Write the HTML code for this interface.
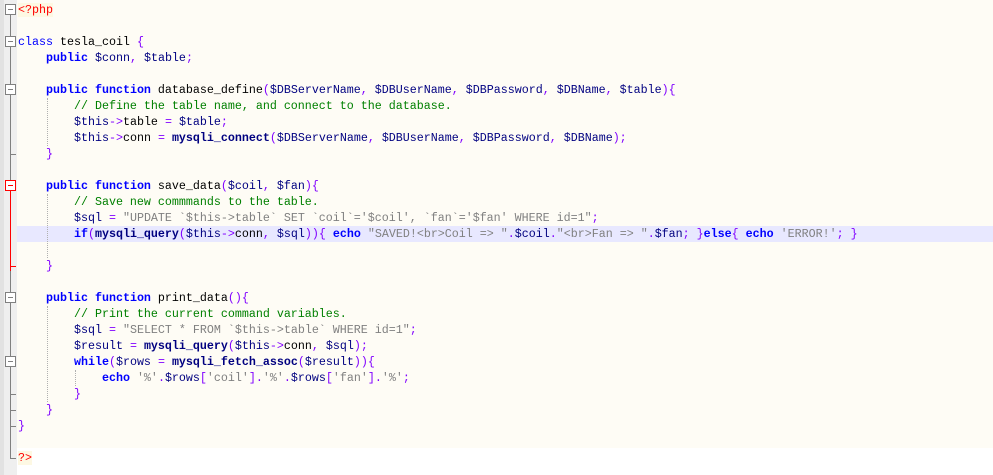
<!DOCTYPE html>
<html><head><meta charset="utf-8"><style>
body{margin:0;width:993px;height:475px;overflow:hidden;background:#fff;position:relative;font-family:"Liberation Mono",monospace;font-size:11.67px}
#margin{position:absolute;left:0;top:0;width:17px;height:475px;background:#efefef}
#margin2{position:absolute;left:0;top:0;width:4px;height:475px;background:#e2e2e2}
#phpbg{position:absolute;left:17px;top:0;width:976px;height:448px;background:#FEFCF5}
.hl{position:absolute;left:17px;width:976px;height:16px;background:#E8E8FF}
.ln{position:absolute;left:18px;height:16px;line-height:16px;white-space:pre;color:#000}
.k{color:#0000FF;font-weight:bold}
.v{color:#000080}
.o{color:#8000FF}
.s{color:#808080}
.c{color:#008000}
.f{color:#000080;font-weight:bold}
.t{color:#FF0000;background:#FDF8E3}
.vl{position:absolute;width:1px}
.hz{position:absolute;height:1px}
.box{position:absolute;left:5px;width:11px;height:11px;border:1px solid #808080;background:#fff;box-sizing:border-box}
.box::after{content:"";position:absolute;left:2px;top:4px;width:5px;height:1px;background:#808080}
.box.r{border-color:#f00}.box.r::after{background:#f00}
.ig{position:absolute;width:0;border-left:1px dotted #b0b0b0}
</style></head><body>
<div id="margin"></div>
<div id="margin2"></div>
<div id="phpbg"></div>
<div class="hl" style="top:226px"></div>
<div class="vl" style="left:10px;top:12px;height:447px;background:#808080"></div>
<div class="vl" style="left:10px;top:186px;height:85px;background:#f00"></div>
<div class="hz" style="left:10px;top:154px;width:6px;background:#808080"></div>
<div class="hz" style="left:10px;top:266px;width:6px;background:#f00"></div>
<div class="hz" style="left:10px;top:394px;width:6px;background:#808080"></div>
<div class="hz" style="left:10px;top:410px;width:6px;background:#808080"></div>
<div class="hz" style="left:10px;top:426px;width:6px;background:#808080"></div>
<div class="hz" style="left:10px;top:458px;width:6px;background:#808080"></div>
<div class="box" style="top:4px"></div>
<div class="box" style="top:36px"></div>
<div class="box" style="top:84px"></div>
<div class="box r" style="top:180px"></div>
<div class="box" style="top:292px"></div>
<div class="box" style="top:356px"></div>
<div class="ig" style="left:47px;top:98px;height:48px"></div>
<div class="ig" style="left:47px;top:194px;height:64px"></div>
<div class="ig" style="left:47px;top:306px;height:96px"></div>
<div class="ig" style="left:75px;top:370px;height:16px"></div>
<div class="ln" style="top:2px"><span class="t">&lt;?php</span></div>
<div class="ln" style="top:34px"><span class="k" style="font-weight:normal">class</span> tesla_coil <span class="o">{</span></div>
<div class="ln" style="top:50px">    <span class="k">public</span> <span class="v">$conn</span><span class="o">,</span> <span class="v">$table</span><span class="o">;</span></div>
<div class="ln" style="top:82px">    <span class="k">public</span> <span class="k">function</span> database_define<span class="o">(</span><span class="v">$DBServerName</span><span class="o">,</span> <span class="v">$DBUserName</span><span class="o">,</span> <span class="v">$DBPassword</span><span class="o">,</span> <span class="v">$DBName</span><span class="o">,</span> <span class="v">$table</span><span class="o">){</span></div>
<div class="ln" style="top:98px">        <span class="c">// Define the table name, and connect to the database.</span></div>
<div class="ln" style="top:114px">        <span class="v">$this</span><span class="o">-&gt;</span>table <span class="o">=</span> <span class="v">$table</span><span class="o">;</span></div>
<div class="ln" style="top:130px">        <span class="v">$this</span><span class="o">-&gt;</span>conn <span class="o">=</span> <span class="f">mysqli_connect</span><span class="o">(</span><span class="v">$DBServerName</span><span class="o">,</span> <span class="v">$DBUserName</span><span class="o">,</span> <span class="v">$DBPassword</span><span class="o">,</span> <span class="v">$DBName</span><span class="o">);</span></div>
<div class="ln" style="top:146px">    <span class="o">}</span></div>
<div class="ln" style="top:178px">    <span class="k">public</span> <span class="k">function</span> save_data<span class="o">(</span><span class="v">$coil</span><span class="o">,</span> <span class="v">$fan</span><span class="o">){</span></div>
<div class="ln" style="top:194px">        <span class="c">// Save new commmands to the table.</span></div>
<div class="ln" style="top:210px">        <span class="v">$sql</span> <span class="o">=</span> <span class="s">"UPDATE `$this-&gt;table` SET `coil`='$coil', `fan`='$fan' WHERE id=1"</span><span class="o">;</span></div>
<div class="ln" style="top:226px">        <span class="k">if</span><span class="o">(</span><span class="f">mysqli_query</span><span class="o">(</span><span class="v">$this</span><span class="o">-&gt;</span>conn<span class="o">,</span> <span class="v">$sql</span><span class="o">)){</span> <span class="k">echo</span> <span class="s">"SAVED!&lt;br&gt;Coil =&gt; "</span><span class="o">.</span><span class="v">$coil</span><span class="o">.</span><span class="s">"&lt;br&gt;Fan =&gt; "</span><span class="o">.</span><span class="v">$fan</span><span class="o">;</span> <span class="o">}</span><span class="k">else</span><span class="o">{</span> <span class="k">echo</span> <span class="s">'ERROR!'</span><span class="o">;</span> <span class="o">}</span></div>
<div class="ln" style="top:258px">    <span class="o">}</span></div>
<div class="ln" style="top:290px">    <span class="k">public</span> <span class="k">function</span> print_data<span class="o">(){</span></div>
<div class="ln" style="top:306px">        <span class="c">// Print the current command variables.</span></div>
<div class="ln" style="top:322px">        <span class="v">$sql</span> <span class="o">=</span> <span class="s">"SELECT * FROM `$this-&gt;table` WHERE id=1"</span><span class="o">;</span></div>
<div class="ln" style="top:338px">        <span class="v">$result</span> <span class="o">=</span> <span class="f">mysqli_query</span><span class="o">(</span><span class="v">$this</span><span class="o">-&gt;</span>conn<span class="o">,</span> <span class="v">$sql</span><span class="o">);</span></div>
<div class="ln" style="top:354px">        <span class="k">while</span><span class="o">(</span><span class="v">$rows</span> <span class="o">=</span> <span class="f">mysqli_fetch_assoc</span><span class="o">(</span><span class="v">$result</span><span class="o">)){</span></div>
<div class="ln" style="top:370px">            <span class="k">echo</span> <span class="s">'%'</span><span class="o">.</span><span class="v">$rows</span><span class="o">[</span><span class="s">'coil'</span><span class="o">].</span><span class="s">'%'</span><span class="o">.</span><span class="v">$rows</span><span class="o">[</span><span class="s">'fan'</span><span class="o">].</span><span class="s">'%'</span><span class="o">;</span></div>
<div class="ln" style="top:386px">        <span class="o">}</span></div>
<div class="ln" style="top:402px">    <span class="o">}</span></div>
<div class="ln" style="top:418px"><span class="o">}</span></div>
<div class="ln" style="top:450px"><span class="t">?&gt;</span></div>
</body></html>
